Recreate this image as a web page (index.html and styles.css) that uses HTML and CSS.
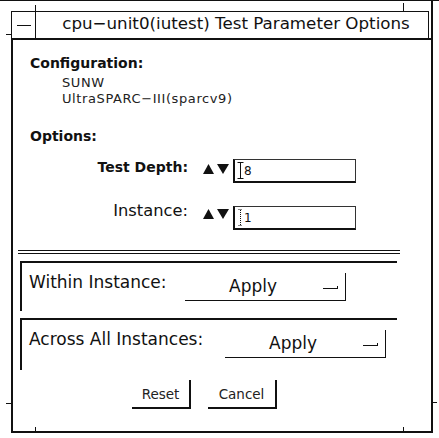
FILE: index.html
```html
<!DOCTYPE html>
<html>
<head>
<meta charset="utf-8">
<title>cpu-unit0(iutest) Test Parameter Options</title>
<link rel="stylesheet" href="styles.css">
</head>
<body>
<div class="topline"></div>
<div class="win">
  <div class="titlebar">
    <div class="menubtn"><span class="dash"></span></div>
    <div class="title">cpu−unit0(iutest) Test Parameter Options</div>
  </div>
  <div class="panel">
    <div class="heading cfg-h">Configuration:</div>
    <div class="cfg first">SUNW</div>
    <div class="cfg">UltraSPARC−III(sparcv9)</div>
    <div class="heading opt-h">Options:</div>

    <div class="frow frow1">
      <div class="flabel strong">Test Depth:</div>
      <svg class="spin" width="27" height="11" viewBox="0 0 27 11"><polygon points="0,10 5.5,0 11,10" fill="#111"/><polygon points="14,0 26,0 20,10" fill="#111"/></svg>
      <div class="field">
        <svg class="caret" width="7" height="17" viewBox="0 0 7 17"><path d="M0.5 0.5H6.5M3.5 0.5V16.5M0.5 16.5H6.5" stroke="#111" fill="none"/></svg>
        <span class="fval">8</span>
      </div>
    </div>

    <div class="frow frow2">
      <div class="flabel">Instance:</div>
      <svg class="spin" width="27" height="11" viewBox="0 0 27 11"><polygon points="0,10 5.5,0 11,10" fill="#111"/><polygon points="14,0 26,0 20,10" fill="#111"/></svg>
      <div class="field">
        <svg class="caret" width="7" height="17" viewBox="0 0 7 17"><path d="M1.5 0.5H5.5M3.5 1V16M1.5 16.5H5.5" stroke="#111" stroke-dasharray="1 1" fill="none"/></svg>
        <span class="fval">1</span>
      </div>
    </div>

    <div class="sep"></div>

    <div class="box box1">
      <div class="blabel">Within Instance:</div>
      <div class="menu"><span class="mtext">Apply</span><span class="mark"></span></div>
    </div>

    <div class="box box2">
      <div class="blabel">Across All Instances:</div>
      <div class="menu"><span class="mtext">Apply</span><span class="mark"></span></div>
    </div>

    <div class="buttons">
      <div class="btn reset">Reset</div>
      <div class="btn cancel">Cancel</div>
    </div>
  </div>
  <span class="tick tk-top-l"></span>
  <span class="tick tk-top-r"></span>
  <span class="tick tk-left-t"></span>
  <span class="tick tk-left-b"></span>
  <span class="tick tk-bot-l"></span>
  <span class="tick tk-bot-r"></span>
  <span class="tick tk-right-b"></span>
</div>
</body>
</html>
```

FILE: styles.css
```css
* { box-sizing: border-box; }
html, body { margin: 0; padding: 0; background: #fff; }
body {
  width: 439px;
  height: 438px;
  overflow: hidden;
  font-family: "DejaVu Sans", "Liberation Sans", sans-serif;
  color: #111;
}
.topline { height: 1px; background: #111; }

.win {
  position: relative;
  margin-left: 11px;
  width: 422px;
  height: 432px;
  padding-top: 10px;
  border-right: 2px solid #111;
  border-bottom: 2px solid #111;
  display: flex;
  flex-direction: column;
}

.titlebar {
  width: 418px;
  height: 27px;
  border: 1px solid #111;
  border-bottom: none;
  display: flex;
}
.menubtn {
  width: 24px;
  border-right: 1px solid #111;
  display: flex;
  align-items: center;
  justify-content: center;
}
.dash { width: 14px; height: 1px; background: #111; margin-top: 1px; }
.title {
  flex: 1;
  text-align: center;
  font-size: 16.7px;
  line-height: 23px;
  padding-left: 8px;
  white-space: nowrap;
}

.panel {
  flex: 1;
  border-left: 2px solid #111;
  border-top: 2px solid #111;
  display: flex;
  flex-direction: column;
  align-items: flex-start;
}

.heading { font-weight: bold; font-size: 14px; line-height: 16px; margin-left: 17px; }
.cfg-h { margin-top: 15px; }
.opt-h { margin-top: 21px; }
.cfg { font-size: 13px; line-height: 16px; letter-spacing: 0.6px; margin-left: 49px; color: #222; }
.cfg.first { margin-top: 4px; }

.frow { display: flex; align-items: flex-start; height: 24px; }
.frow1 { margin-top: 15px; }
.frow2 { margin-top: 23px; }
.flabel {
  width: 175px;
  text-align: right;
  font-size: 16.3px;
  line-height: 18px;
  margin-top: -4px;
  white-space: nowrap;
}
.flabel.strong { font-weight: bold; font-size: 14px; line-height: 16px; margin-top: 0; }
.spin { margin-left: 15px; margin-top: 5px; }
.frow2 .spin { margin-top: 3px; }
.field {
  margin-left: 3px;
  width: 123px;
  height: 24px;
  border-top: 1px solid #333;
  border-right: 1px solid #333;
  border-bottom: 2px solid #111;
  border-left: 2px solid #111;
  display: flex;
  align-items: center;
  padding-left: 2px;
}
.caret { flex: none; }
.fval { font-size: 12px; line-height: 14px; }

.sep {
  margin-top: 20px;
  margin-left: 5px;
  width: 382px;
  height: 4px;
  border-top: 1px solid #111;
  border-bottom: 1px solid #111;
}

.box {
  margin-left: 7px;
  width: 377px;
  border-top: 2px solid #111;
  border-left: 2px solid #111;
  display: flex;
  align-items: flex-start;
  padding-top: 10px;
}
.box1 { margin-top: 7px; height: 50px; }
.box2 { margin-top: 7px; height: 52px; }
.blabel {
  padding-left: 7px;
  font-size: 17px;
  line-height: 18px;
  white-space: nowrap;
}
.box1 .blabel { width: 163px; }
.box2 .blabel { width: 203px; }

.menu {
  width: 161px;
  height: 28px;
  border-right: 1px solid #111;
  border-bottom: 1px solid #111;
  display: flex;
  align-items: flex-start;
}
.mtext {
  flex: 1;
  text-align: center;
  font-size: 17px;
  line-height: 27px;
  padding-left: 2px;
}
.mark {
  width: 15px;
  height: 3px;
  margin-top: 13px;
  margin-right: 7px;
  margin-left: 4px;
  border-bottom: 1px solid #111;
  border-right: 1px solid #111;
}

.buttons { display: flex; margin-top: 10px; margin-left: 119px; gap: 17px; }
.btn {
  height: 29px;
  border-right: 2px solid #111;
  border-bottom: 2px solid #111;
  text-align: center;
  font-size: 13.5px;
  line-height: 27px;
  padding-top: 1px;
  color: #222;
}
.reset { width: 59px; }
.cancel { width: 69px; }

.tick { position: absolute; background: #111; }
.tk-top-l { left: 24px; top: 4px; width: 1px; height: 6px; }
.tk-top-r { left: 392px; top: 2px; width: 1px; height: 8px; }
.tk-left-t { left: -5px; top: 33px; width: 5px; height: 1px; }
.tk-left-b { left: -5px; top: 402px; width: 5px; height: 1px; }
.tk-bot-l { left: 24px; top: 426px; width: 1px; height: 4px; }
.tk-bot-r { left: 392px; top: 426px; width: 1px; height: 4px; }
.tk-right-b { left: 421px; top: 401px; width: 5px; height: 1px; }
```
